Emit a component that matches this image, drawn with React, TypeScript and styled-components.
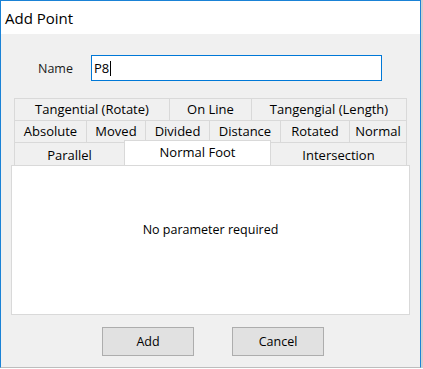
import React from 'react'
import styled, { createGlobalStyle } from 'styled-components'

const GlobalStyle = createGlobalStyle`
  html, body {
    margin: 0;
    padding: 0;
    background: #ffffff;
  }
  body {
    font-family: "Open Sans", "Noto Sans", "DejaVu Sans", sans-serif;
    color: #000;
  }
`

type TabDef = { label: string; width: number; active?: boolean }

const tabRows: TabDef[][] = [
  [
    { label: 'Tangential (Rotate)', width: 156 },
    { label: 'On Line', width: 83 },
    { label: 'Tangengial (Length)', width: 156 },
  ],
  [
    { label: 'Absolute', width: 73 },
    { label: 'Moved', width: 60 },
    { label: 'Divided', width: 65 },
    { label: 'Distance', width: 72 },
    { label: 'Rotated', width: 70 },
    { label: 'Normal', width: 58 },
  ],
  [
    { label: 'Parallel', width: 111 },
    { label: 'Normal Foot', width: 147, active: true },
    { label: 'Intersection', width: 137 },
  ],
]

const App = () => {
  return (
    <>
      <GlobalStyle />
      <Window>
        <TitleBar>Add Point</TitleBar>
        <Body>
          <NameRow>
            <Label>Name</Label>
            <TextBox>
              P8<Caret />
            </TextBox>
          </NameRow>

          <TabWidget>
            {tabRows.map((row, i) => (
              <TabRow key={i} $last={i === tabRows.length - 1}>
                {row.map((t) => (
                  <Tab key={t.label} $width={t.width} $active={t.active}>
                    {t.label}
                  </Tab>
                ))}
              </TabRow>
            ))}
            <Pane>No parameter required</Pane>
          </TabWidget>

          <ButtonRow>
            <Button>Add</Button>
            <Button>Cancel</Button>
          </ButtonRow>
        </Body>
      </Window>
    </>
  )
}

export default App

const Window = styled.div`
  box-sizing: border-box;
  width: 421px;
  height: 368px;
  border: 1px solid #1a82d6;
  border-bottom-color: #bdbdbd;
  box-shadow: 2px 0 0 #cfcfcf;
  display: flex;
  flex-direction: column;
  background: #f0f0f0;
`

const TitleBar = styled.div`
  box-sizing: border-box;
  height: 33px;
  background: #ffffff;
  padding: 2px 0 0 4px;
  font-size: 15px;
  line-height: 31px;
  color: #000;
`

const Body = styled.div`
  flex: 1;
  display: flex;
  flex-direction: column;
  background: #f0f0f0;
`

const NameRow = styled.div`
  display: flex;
  align-items: center;
  margin-top: 21px;
  padding-left: 37px;
`

const Label = styled.div`
  width: 53px;
  font-size: 12.5px;
  color: #1a1a1a;
`

const TextBox = styled.div`
  box-sizing: border-box;
  width: 291px;
  height: 26px;
  border: 1px solid #0078d7;
  background: #fff;
  padding-left: 2px;
  font-size: 13px;
  display: flex;
  align-items: center;
`

const Caret = styled.span`
  display: inline-block;
  width: 1px;
  height: 15px;
  background: #000;
  margin-left: 1px;
`

const TabWidget = styled.div`
  margin: 17px 0 0 10px;
  width: 399px;
  display: flex;
  flex-direction: column;
`

const TabRow = styled.div<{ $last?: boolean }>`
  display: flex;
  padding: 0 3px;
  height: ${(p) => (p.$last ? 23 : 22)}px;
  line-height: ${(p) => (p.$last ? 25 : 21)}px;
`

const Tab = styled.div<{ $width: number; $active?: boolean }>`
  box-sizing: border-box;
  width: ${(p) => p.$width}px;
  height: ${(p) => (p.$active ? 26 : 'auto')};
  margin-top: ${(p) => (p.$active ? -2 : 0)}px;
  line-height: ${(p) => (p.$active ? '23px' : 'inherit')};
  position: relative;
  z-index: ${(p) => (p.$active ? 1 : 0)};
  border: 1px solid #d9d9d9;
  border-bottom: none;
  background: ${(p) => (p.$active ? '#ffffff' : '#f0f0f0')};
  font-size: 13px;
  text-align: center;
  white-space: nowrap;
  & + & {
    margin-left: -1px;
  }
`

const Pane = styled.div`
  box-sizing: border-box;
  height: 150px;
  background: #ffffff;
  border: 1px solid #d9d9d9;
  display: flex;
  align-items: center;
  justify-content: center;
  font-size: 12.5px;
  padding-bottom: 22px;
`

const ButtonRow = styled.div`
  display: flex;
  gap: 38px;
  margin-top: 12px;
  padding-left: 101px;
`

const Button = styled.button`
  box-sizing: border-box;
  width: 92px;
  height: 29px;
  border: 1px solid #adadad;
  background: #e1e1e1;
  font-family: "Open Sans", "Noto Sans", sans-serif;
  font-size: 12.5px;
  color: #000;
  padding: 0;
`
